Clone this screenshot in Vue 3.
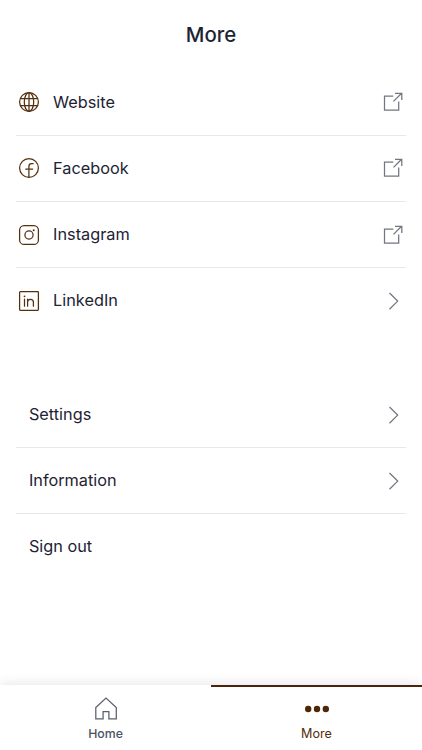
<script setup>
const links = [
  { label: 'Website', icon: 'globe', external: true },
  { label: 'Facebook', icon: 'facebook', external: true },
  { label: 'Instagram', icon: 'instagram', external: true },
  { label: 'LinkedIn', icon: 'linkedin', external: false },
]
const options = [
  { label: 'Settings', chevron: true },
  { label: 'Information', chevron: true },
  { label: 'Sign out', chevron: false },
]
</script>

<template>
  <div class="screen">
    <header class="header"><h1>More</h1></header>
    <main class="content">
      <ul class="list">
        <li v-for="link in links" :key="link.label" class="row">
          <svg class="brand" viewBox="0 0 22 22">
            <g v-if="link.icon === 'globe'">
              <circle cx="11" cy="11" r="9.4" />
              <ellipse cx="11" cy="11" rx="4.7" ry="9.4" />
              <path d="M11 1.6v18.8M2.5 7.5h17M2.5 14.5h17" />
            </g>
            <g v-else-if="link.icon === 'facebook'">
              <circle cx="11" cy="11" r="9.4" />
              <path d="M10.9 20.2V9.5Q10.9 6.7 13.5 6.7H15.1M7.7 12.1h7" />
            </g>
            <g v-else-if="link.icon === 'instagram'">
              <rect x="1.6" y="1.6" width="18.8" height="18.8" rx="4.5" />
              <circle cx="11" cy="11" r="4.1" />
              <circle class="solid" cx="15.7" cy="6.2" r="1" />
            </g>
            <g v-else>
              <rect x="1.6" y="1.6" width="18.8" height="18.8" rx="0.8" />
              <path d="M6.5 9v7.2M9.6 9v7.2M9.6 12q0-2.7 2.9-2.7t2.9 2.9v4" />
              <circle class="solid" cx="6.5" cy="6.3" r="0.9" />
            </g>
          </svg>
          <span class="label">{{ link.label }}</span>
          <svg v-if="link.external" class="action" viewBox="0 0 24 24">
            <path d="M12.3 6H3.5v14.2h14.2v-8.8" />
            <path d="M12.5 11.4l8.1-8.1M14 3.3h6.8v6.8" />
          </svg>
          <svg v-else class="action" viewBox="0 0 24 24"><path d="M8.5 4l8.2 8.1-8.2 8.1" /></svg>
        </li>
      </ul>
      <ul class="list options">
        <li v-for="option in options" :key="option.label" class="row">
          <span class="label">{{ option.label }}</span>
          <svg v-if="option.chevron" class="action" viewBox="0 0 24 24"><path d="M8.5 4l8.2 8.1-8.2 8.1" /></svg>
        </li>
      </ul>
    </main>
    <nav class="tabs">
      <a class="tab">
        <svg viewBox="0 0 26 26"><path d="M2.8 11.5L13 2l10.3 9.5v11.3h-7.4v-7.2h-5.8v7.2H2.8z" /></svg>
        <span>Home</span>
      </a>
      <a class="tab active">
        <svg viewBox="0 0 26 26">
          <circle cx="4.2" cy="13" r="3.2" /><circle cx="13" cy="13" r="3.2" /><circle cx="21.8" cy="13" r="3.2" />
        </svg>
        <span>More</span>
      </a>
    </nav>
  </div>
</template>

<style>
body { margin: 0; background: #fff; }
</style>

<style scoped>
.screen {
  display: flex;
  flex-direction: column;
  height: 750px;
  overflow: hidden;
  background: #fff;
  color: #1d2333;
  font-family: Inter, "Liberation Sans", sans-serif;
}
.header {
  display: flex;
  align-items: center;
  justify-content: center;
  box-sizing: border-box;
  height: 69.8px;
  padding-top: 1px;
}
h1 { margin: 0; font-size: 20.4px; line-height: 28px; font-weight: 500; }
.content { flex: 1; padding: 0 16.4px; }
.list { margin: 0; padding: 0; list-style: none; }
.options { margin-top: 48px; }
.row {
  display: flex;
  align-items: center;
  box-sizing: border-box;
  height: 66.1px;
  padding-right: 1px;
  border-bottom: 1px solid #e8e8ea;
}
.row:last-child { border-bottom-color: transparent; }
.label { flex: 1; padding-bottom: 1px; font-size: 16.3px; line-height: 24px; }
.options .label { padding-left: 12.5px; }
.brand {
  width: 22px;
  height: 22px;
  margin: 0 13.2px 0 1.5px;
  fill: none;
  stroke: #54300f;
  stroke-width: 1.25;
  stroke-linecap: round;
}
.brand .solid { fill: #54300f; stroke: none; }
.action { width: 24px; height: 24px; fill: none; stroke: #737580; stroke-width: 1.25; }
.tabs {
  display: flex;
  height: 65.4px;
  background: #fff;
  box-shadow: 0 0 12px rgba(0, 0, 0, 0.12);
}
.tab {
  display: flex;
  flex: 1;
  flex-direction: column;
  align-items: center;
  box-sizing: border-box;
  padding-top: 9.5px;
  border-top: 2px solid transparent;
  color: #4c5263;
  font-size: 12.3px;
  line-height: 16px;
  font-weight: 500;
}
.tab svg { width: 26px; height: 26px; margin-bottom: 3.4px; fill: none; stroke: #5b6070; stroke-width: 1.25; }
.tab.active { border-top-color: #4a2509; color: #542d0e; font-weight: 400; font-size: 12.6px; }
.tab.active svg { fill: #502704; stroke: none; }
</style>
